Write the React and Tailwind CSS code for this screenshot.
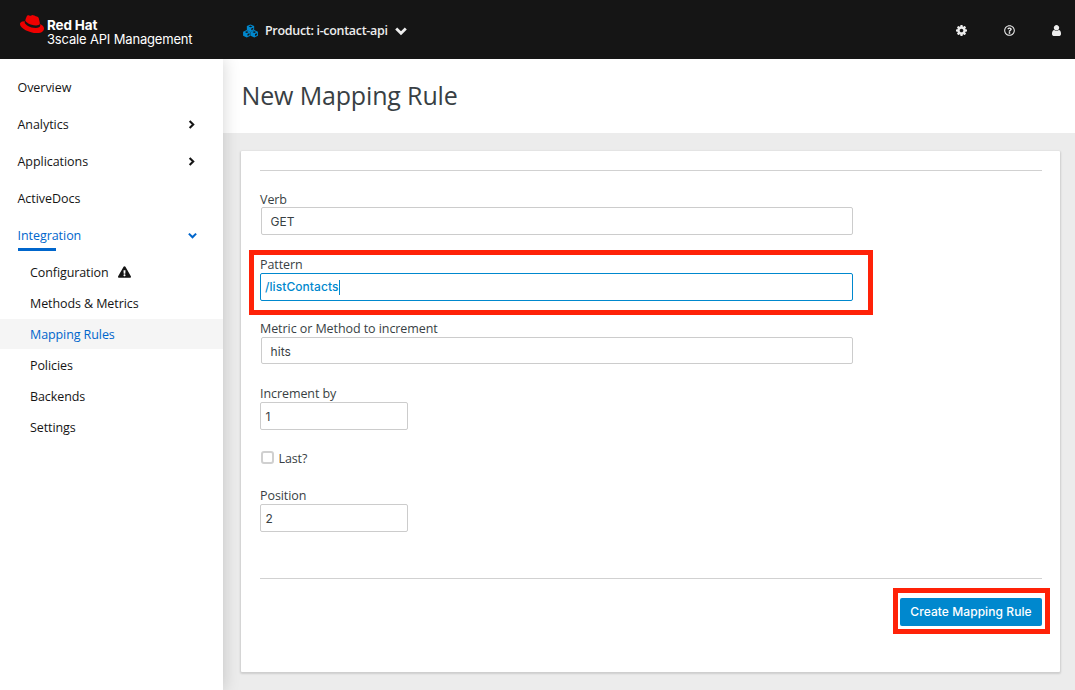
import React from "react";
import { FaRedhat, FaRegQuestionCircle, FaExclamationTriangle } from "react-icons/fa";

const sections = [
  { label: "Overview" },
  { label: "Analytics", arrow: true },
  { label: "Applications", arrow: true },
  { label: "ActiveDocs" },
];

const integration = [
  { label: "Configuration", warning: true },
  { label: "Methods & Metrics" },
  { label: "Mapping Rules", active: true },
  { label: "Policies" },
  { label: "Backends" },
  { label: "Settings" },
];

function Cube({ x, y }) {
  return (
    <g transform={`translate(${x} ${y})`}>
      <path d="M4 0 7.9 1.7V6L4 8 0.1 6V1.7Z" fill="#0088ce" />
      <path d="M4 1.2 6 2.1 4 3 2 2.1Z" fill="#151515" />
      <path d="M4.8 4.3 6.9 3.4V5.2L4.8 6.3Z" fill="#151515" />
    </g>
  );
}

function CubesIcon() {
  return (
    <svg viewBox="0 0 16 14" className="-mt-px h-[14px] w-[15px]">
      <Cube x={4} y={0} />
      <Cube x={0} y={6} />
      <Cube x={8} y={6} />
    </svg>
  );
}

function Chevron({ className, right }) {
  return (
    <svg viewBox="0 0 12 12" className={className} fill="none" stroke="currentColor" strokeWidth="2.8">
      <path d={right ? "M3.5 1.2 8.3 6 3.5 10.8" : "M1.2 3.5 6 8.3 10.8 3.5"} />
    </svg>
  );
}

function CogIcon() {
  return (
    <svg viewBox="128 128 1536 1536" className="h-[11px] w-[11px]" fill="currentColor">
      <path d="M1152 896q0-106-75-181t-181-75-181 75-75 181 75 181 181 75 181-75 75-181zm512-109v222q0 12-8 23t-20 13l-185 28q-19 54-39 91 35 50 107 138 10 12 10 25t-9 23q-27 37-99 108t-94 71q-12 0-26-9l-138-108q-44 23-91 38-16 136-29 186-7 28-36 28h-222q-14 0-24.5-8.5t-11.5-21.5l-28-184q-49-16-90-37l-141 107q-10 9-25 9-14 0-25-11-126-114-165-168-7-10-7-23 0-12 8-23 15-21 51-66.5t54-70.5q-27-50-41-99l-183-27q-13-2-21-12.5t-8-23.5v-222q0-12 8-23t19-13l186-28q14-46 39-92-40-57-107-138-10-12-10-24 0-10 9-23 26-36 98.5-107.5t94.5-71.5q13 0 26 10l138 107q44-23 91-38 16-136 29-186 7-28 36-28h222q14 0 24.5 8.5t11.5 21.5l28 184q49 16 90 37l142-107q9-9 24-9 13 0 25 10 129 119 165 170 7 8 7 22 0 12-8 23-15 21-51 66.5t-54 70.5q26 50 41 98l183 28q13 2 21 12.5t8 23.5z" />
    </svg>
  );
}

function UserIcon() {
  return (
    <svg viewBox="256 128 1280 1536" className="h-[11px] w-[9px]" fill="currentColor">
      <path d="M1536 1399q0 109-62.5 187t-150.5 78h-854q-88 0-150.5-78t-62.5-187q0-85 8.5-160.5t31.5-152 58.5-131 94-89 134.5-34.5q131 128 313 128t313-128q76 0 134.5 34.5t94 89 58.5 131 31.5 152 8.5 160.5zm-256-887q0 159-112.5 271.5t-271.5 112.5-271.5-112.5-112.5-271.5 112.5-271.5 271.5-112.5 271.5 112.5 112.5 271.5z" />
    </svg>
  );
}

function Header() {
  return (
    <header className="flex h-[59px] shrink-0 items-center bg-[#151515] text-[#ededed]">
      <div className="flex w-[223px] items-start pl-5">
        <FaRedhat className="-mt-[2px] h-[24px] w-[24px] shrink-0 text-[#ee0000]" />
        <div className="ml-[3px] pt-[4px] font-['Inter'] text-white">
          <div className="text-[13.5px] leading-[14px] font-bold tracking-[-0.15px]">Red Hat</div>
          <div className="text-[13px] leading-[14px] tracking-[-0.17px] whitespace-nowrap">3scale API Management</div>
        </div>
      </div>
      <div className="flex flex-1 items-center pl-5 pt-[3px]">
        <CubesIcon />
        <span className="ml-[7px] text-[12.5px] font-semibold tracking-[-0.31px]">Product: i-contact-api</span>
        <Chevron className="ml-[7px] h-[12px] w-[12px]" />
      </div>
      <div className="flex items-center gap-[37px] pt-[2px] pr-[14px]">
        <CogIcon />
        <FaRegQuestionCircle className="h-[11px] w-[11px]" />
        <UserIcon />
      </div>
    </header>
  );
}

function Sidebar() {
  return (
    <nav className="relative z-10 w-[223px] shrink-0 bg-white pt-[10px] text-[12.5px] text-[#151515] shadow-[0_0_16px_rgba(3,3,3,0.18)]">
      {sections.map((s) => (
        <div key={s.label} className="flex h-[37px] items-center justify-between pr-[27px] pl-[17.5px]">
          <span className="pt-[2px] tracking-[-0.05px]">{s.label}</span>
          {s.arrow && <Chevron right className="-mt-px h-[9px] w-[9px]" />}
        </div>
      ))}
      <div className="h-[34px] pt-[9px] pr-[17px] pl-[17.5px] text-[#0066cc]">
        <div className="flex h-[19px] items-center justify-between pr-[9px]">
          <span className="pt-[2px] tracking-[-0.05px]">Integration</span>
          <Chevron className="-mt-px h-[9px] w-[9px]" />
        </div>
        <div className="mt-[3px] h-[3px] w-[38px] bg-[#0066cc]" />
      </div>
      <div className="mt-[6px] flex flex-col gap-px tracking-[-0.09px]">
        {integration.map((s) => (
          <div
            key={s.label}
            className={"flex h-[30px] items-center pt-[2px] pl-[30px] " + (s.active ? "bg-[#f5f5f5] text-[#0066cc]" : "")}
          >
            {s.label}
            {s.warning && <FaExclamationTriangle className="-mt-[2px] ml-[9px] h-[12px] w-[13px]" />}
          </div>
        ))}
      </div>
    </nav>
  );
}

function Label({ children, low }) {
  return (
    <label className={"block h-[17px] text-[12.5px] tracking-[-0.07px] " + (low ? "leading-[19px]" : "leading-[17px]")}>
      {children}
    </label>
  );
}

const box = "block rounded-[2px] border bg-white font-['Inter'] text-[12px] outline-none ";

function Form() {
  return (
    <form className="h-[521px] rounded-[1px] bg-white px-[19px] pt-[19px] text-[#393f44] shadow-[0_1px_2px_1px_rgba(3,3,3,0.13)]">
      <div className="w-[782px] border-t border-[#d1d1d1] pt-[19px]">
        <div>
          <Label low>Verb</Label>
          <div className={box + "ml-px flex h-[28px] w-[592px] items-center border-[#cccccc] pt-px pl-[8.5px]"}>GET</div>
        </div>
        <div className="relative mt-[21px]">
          <Label>Pattern</Label>
          <div className={box + "flex h-[28px] w-[593px] items-center border-[#0088ce] pl-[4px] font-medium tracking-[0.07px] text-[#0088ce]"}>
            /listContacts
            <span className="h-[15px] w-px bg-[#0088ce]" />
          </div>
          <div className="absolute -top-[6px] -left-[11px] h-[65px] w-[624px] border-[5px] border-[#ff2208]" />
        </div>
        <div className="mt-[19px]">
          <Label>Metric or Method to increment</Label>
          <div className={box + "ml-px flex h-[27px] w-[592px] items-center border-[#cccccc] pt-[3px] pl-[8.5px] tracking-[0.1px]"}>hits</div>
        </div>
        <div className="mt-[21px]">
          <Label>Increment by</Label>
          <div className={box + "flex h-[28px] w-[148px] items-center border-[#cccccc] pt-px pl-[4.5px]"}>1</div>
        </div>
        <div className="mt-[20px] flex h-[17px] items-center pt-px text-[12.5px] tracking-[-0.12px]">
          <span className="-mt-[4px] mr-[4.5px] ml-px h-[13px] w-[13px] rounded-[3px] border-2 border-[#d0d0d0] bg-white" />
          Last?
        </div>
        <div className="mt-[20px]">
          <Label>Position</Label>
          <div className={box + "flex h-[28px] w-[148px] items-center border-[#cccccc] pt-px pl-[4.5px]"}>2</div>
        </div>
      </div>
      <div className="mt-[46px] flex w-[782px] justify-end border-t border-[#d1d1d1] pt-[19px]">
        <div className="relative">
          <button type="button" className="h-[28px] w-[142px] rounded-[2px] bg-[#0088ce] font-['Inter'] text-[12px] font-medium tracking-[0.07px] whitespace-nowrap text-white">
            Create Mapping Rule
          </button>
          <div className="absolute -top-[10px] -left-[7px] h-[46px] w-[157px] border-[5px] border-[#ff2208]" />
        </div>
      </div>
    </form>
  );
}

export default function App() {
  return (
    <div className="flex h-[690px] w-[1075px] flex-col overflow-hidden bg-[#ececec] font-['Open_Sans',sans-serif]">
      <Header />
      <div className="flex flex-1 overflow-hidden">
        <Sidebar />
        <main className="w-[852px]">
          <div className="flex h-[74px] items-center bg-white pl-[18.5px] text-[25px] tracking-[-0.15px] text-[#393f44]">
            <h1>New Mapping Rule</h1>
          </div>
          <div className="pt-[18px] pr-[15px] pl-[18px]">
            <Form />
          </div>
        </main>
      </div>
    </div>
  );
}
